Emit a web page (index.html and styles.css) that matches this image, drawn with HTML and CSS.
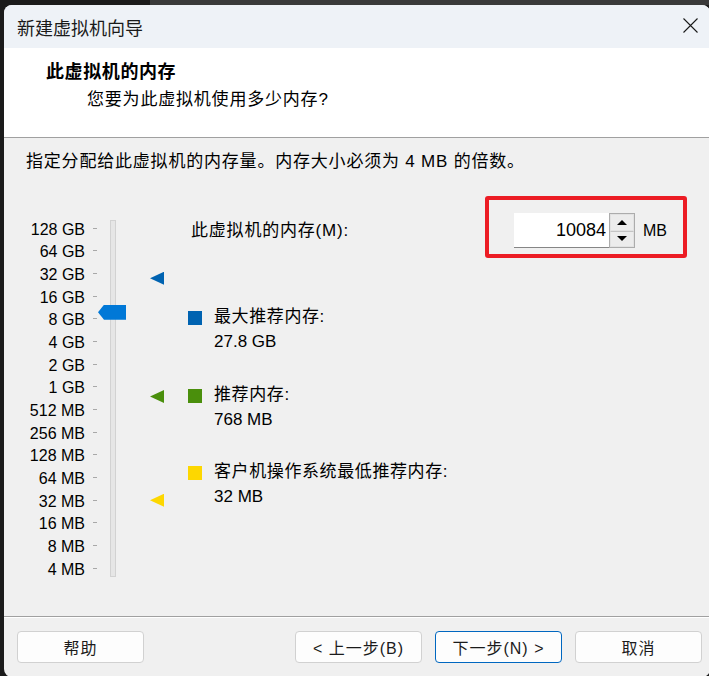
FILE: index.html
```html
<!DOCTYPE html>
<html lang="zh-CN">
<head>
    <meta charset="UTF-8">
    <meta name="viewport" content="width=device-width, initial-scale=1.0">
    <title>新建虚拟机向导</title>
    <link rel="stylesheet" href="styles.css">
</head>
<body>
    <div class="window">
        <div class="titlebar">
            <span class="title">新建虚拟机向导</span>
            <button class="close" aria-label="关闭">
                <svg width="15" height="15" viewBox="0 0 15 15">
                    <path d="M0.5 0.5 L14.5 14.5 M14.5 0.5 L0.5 14.5" stroke="#1a1a1a" stroke-width="1.1" fill="none"/>
                </svg>
            </button>
        </div>

        <div class="header">
            <h1>此虚拟机的内存</h1>
            <p class="subtitle">您要为此虚拟机使用多少内存?</p>
        </div>

        <div class="content">
            <p class="intro">指定分配给此虚拟机的内存量。内存大小必须为 4 MB 的倍数。</p>

            <div class="main">
                <div class="scale">
                    <ul class="scale-labels">
                        <li>128 GB</li>
                        <li>64 GB</li>
                        <li>32 GB</li>
                        <li>16 GB</li>
                        <li>8 GB</li>
                        <li>4 GB</li>
                        <li>2 GB</li>
                        <li>1 GB</li>
                        <li>512 MB</li>
                        <li>256 MB</li>
                        <li>128 MB</li>
                        <li>64 MB</li>
                        <li>32 MB</li>
                        <li>16 MB</li>
                        <li>8 MB</li>
                        <li>4 MB</li>
                    </ul>
                    <div class="track">
                        <div class="thumb" id="thumb"></div>
                    </div>
                    <div class="markers">
                        <span class="marker blue" data-mb="28467"></span>
                        <span class="marker green" data-mb="768"></span>
                        <span class="marker yellow" data-mb="32"></span>
                    </div>
                </div>

                <div class="details">
                    <div class="field">
                        <label for="memInput">此虚拟机的内存(M):</label>
                        <div class="highlight">
                            <input type="text" id="memInput" class="mem-input" value="10084">
                            <div class="spin">
                                <span class="spin-btn"><i class="arrow-up"></i></span>
                                <span class="spin-btn"><i class="arrow-down"></i></span>
                            </div>
                            <span class="unit">MB</span>
                        </div>
                    </div>

                    <ul class="legend">
                        <li>
                            <div class="legend-label"><span class="swatch blue"></span>最大推荐内存:</div>
                            <div class="legend-value">27.8 GB</div>
                        </li>
                        <li>
                            <div class="legend-label"><span class="swatch green"></span>推荐内存:</div>
                            <div class="legend-value">768 MB</div>
                        </li>
                        <li>
                            <div class="legend-label"><span class="swatch yellow"></span>客户机操作系统最低推荐内存:</div>
                            <div class="legend-value">32 MB</div>
                        </li>
                    </ul>
                </div>
            </div>
        </div>

        <div class="footer">
            <button class="btn btn-help">帮助</button>
            <div class="nav">
                <button class="btn">&lt; 上一步(B)</button>
                <button class="btn btn-default">下一步(N) &gt;</button>
                <button class="btn">取消</button>
            </div>
        </div>
    </div>

    <script>
        // one row of the scale = one power of two, top row is 128 GB
        const ROW = 68 / 3;
        const TOP_MB = 131072;

        function offsetFor(mb) {
            return ROW / 2 + Math.log2(TOP_MB / mb) * ROW;
        }

        function placeThumb(mb) {
            const thumb = document.getElementById('thumb');
            // track starts 4px below the scale top (margin + border)
            thumb.style.top = (offsetFor(mb) - 4 - 7.5) + 'px';
        }

        document.querySelectorAll('.marker').forEach(marker => {
            marker.style.top = (offsetFor(Number(marker.dataset.mb)) - 6.5) + 'px';
        });

        const memInput = document.getElementById('memInput');
        memInput.addEventListener('input', () => {
            const mb = parseInt(memInput.value, 10);
            if (mb >= 4 && mb <= TOP_MB) placeThumb(mb);
        });

        placeThumb(Number(memInput.value));
    </script>
</body>
</html>
```

FILE: styles.css
```css
body {
    margin: 0;
    height: 676px;
    overflow: hidden;
    background: linear-gradient(to right, #1b1b1b 150px, #3a3a3a 150px) top left / 100% 5px no-repeat, #1b1b1b;
    font-family: "Liberation Sans", "Noto Sans CJK SC", sans-serif;
    color: #000;
}

.window {
    margin: 5px 0 0 4px;
    width: 706px;
    height: 672px;
    border-radius: 8px;
    overflow: hidden;
    background-color: #f0f0f0;
    display: flex;
    flex-direction: column;
}

/* title bar */
.titlebar {
    flex-shrink: 0;
    height: 43px;
    display: flex;
    align-items: center;
    padding-left: 13px;
    background-color: #eef2f7;
}

.title {
    font-family: "Noto Sans CJK SC", sans-serif;
    font-size: 18px;
    line-height: 24px;
    color: #1a1a1a;
}

.close {
    margin-left: auto;
    margin-right: 12px;
    margin-bottom: 2px;
    padding: 0;
    width: 15px;
    height: 15px;
    border: none;
    background: none;
    display: flex;
}

/* white header */
.header {
    flex-shrink: 0;
    height: 77px;
    padding: 12px 0 0 42px;
    background-color: #fff;
    border-bottom: 1px solid #a0a0a0;
}

.header h1 {
    margin: 0;
    font-size: 18px;
    font-weight: bold;
    line-height: 24px;
    letter-spacing: 0.6px;
}

.subtitle {
    margin: 4px 0 0 41px;
    font-size: 17px;
    line-height: 24px;
    letter-spacing: 0.8px;
}

/* body */
.content {
    flex: 1;
    padding-top: 12px;
}

.intro {
    margin: 0 0 0 22px;
    font-size: 17px;
    line-height: 24px;
    letter-spacing: 0.8px;
}

.main {
    display: flex;
    margin-top: 22px;
}

.scale {
    display: flex;
    align-items: flex-start;
    margin-top: 21px;
}

.scale-labels {
    list-style: none;
    margin: 0;
    padding: 0;
    width: 93px;
}

.scale-labels li {
    box-sizing: border-box;
    height: 22.667px;
    padding-top: 3px;
    display: flex;
    align-items: center;
    justify-content: flex-end;
    font-size: 16px;
}

.scale-labels li::after {
    content: "";
    width: 4px;
    height: 1px;
    margin-left: 8px;
    margin-bottom: 3px;
    background-color: #a8a8a8;
}

.track {
    position: relative;
    width: 4px;
    height: 355px;
    margin: 3px 0 0 13px;
    border: 1px solid #d2d2d2;
    background-color: #e6e6e6;
}

.thumb {
    position: absolute;
    left: -13px;
    width: 28px;
    height: 15px;
    background-color: #0078d7;
    clip-path: polygon(0 50%, 6px 0, 100% 0, 100% 100%, 6px 100%);
}

.markers {
    position: relative;
    width: 14px;
    height: 362px;
    margin-left: 34px;
}

.marker {
    position: absolute;
    left: 0;
    width: 14px;
    height: 13px;
    clip-path: polygon(0 50%, 100% 0, 100% 100%);
}

.blue {
    background-color: #0063b1;
}

.green {
    background-color: #4a8f0c;
}

.yellow {
    background-color: #fdd700;
}

.details {
    flex: 1;
    margin-left: 24px;
    padding-right: 23px;
}

.field {
    display: flex;
    align-items: flex-start;
    height: 62px;
}

.field label {
    margin: 23px 0 0 3px;
    font-size: 17px;
    line-height: 24px;
    letter-spacing: 0.8px;
}

.highlight {
    margin-left: auto;
    display: flex;
    align-items: center;
    padding: 13px 16px 6px 25px;
    border: 4px solid #ec1c24;
    border-radius: 3px;
}

.mem-input {
    box-sizing: border-box;
    width: 95px;
    height: 35px;
    padding: 0 3px 0 0;
    border: none;
    border-bottom: 1px solid #868686;
    background-color: #fff;
    text-align: right;
    font-family: "Liberation Sans", sans-serif;
    font-size: 18px;
    color: #000;
    outline: none;
}

.spin {
    box-sizing: border-box;
    width: 26px;
    height: 35px;
    border: 1px solid #acacac;
    display: flex;
    flex-direction: column;
}

.spin-btn {
    flex: 1;
    display: flex;
    align-items: center;
    justify-content: center;
    border: 1px solid #e2e2e2;
    background-color: #ececec;
}

.spin-btn + .spin-btn {
    border-top-color: #c4c4c4;
}

.arrow-up,
.arrow-down {
    width: 0;
    height: 0;
    border-left: 5px solid transparent;
    border-right: 5px solid transparent;
}

.arrow-up {
    border-bottom: 5px solid #000;
}

.arrow-down {
    border-top: 5px solid #000;
}

.unit {
    margin-left: 8px;
    font-size: 16px;
}

.legend {
    list-style: none;
    margin: 47px 0 0;
    padding: 0;
    display: flex;
    flex-direction: column;
    gap: 28.5px;
}

.legend-label {
    display: flex;
    align-items: center;
    font-size: 17px;
    line-height: 24px;
    letter-spacing: 0.6px;
}

.swatch {
    flex-shrink: 0;
    width: 14px;
    height: 14px;
    margin: 2px 12px 0 0;
}

.legend-value {
    margin-top: 1px;
    padding-left: 26px;
    font-size: 17px;
    line-height: 24px;
}

/* button row */
.footer {
    flex-shrink: 0;
    display: flex;
    padding: 14px 8px 14px 13px;
    border-top: 1px solid #a0a0a0;
    box-shadow: inset 0 1px #fff;
}

.nav {
    margin-left: auto;
    display: flex;
    gap: 13px;
}

.btn {
    width: 127px;
    height: 32px;
    padding: 0;
    border: 1px solid #d1d1d1;
    border-radius: 4px;
    background-color: #fdfdfd;
    font-family: "Liberation Sans", "Noto Sans CJK SC", sans-serif;
    font-size: 16px;
    letter-spacing: 1px;
    color: #1b1b1b;
    cursor: pointer;
}

.btn-default {
    border-color: #0067c0;
}
```
